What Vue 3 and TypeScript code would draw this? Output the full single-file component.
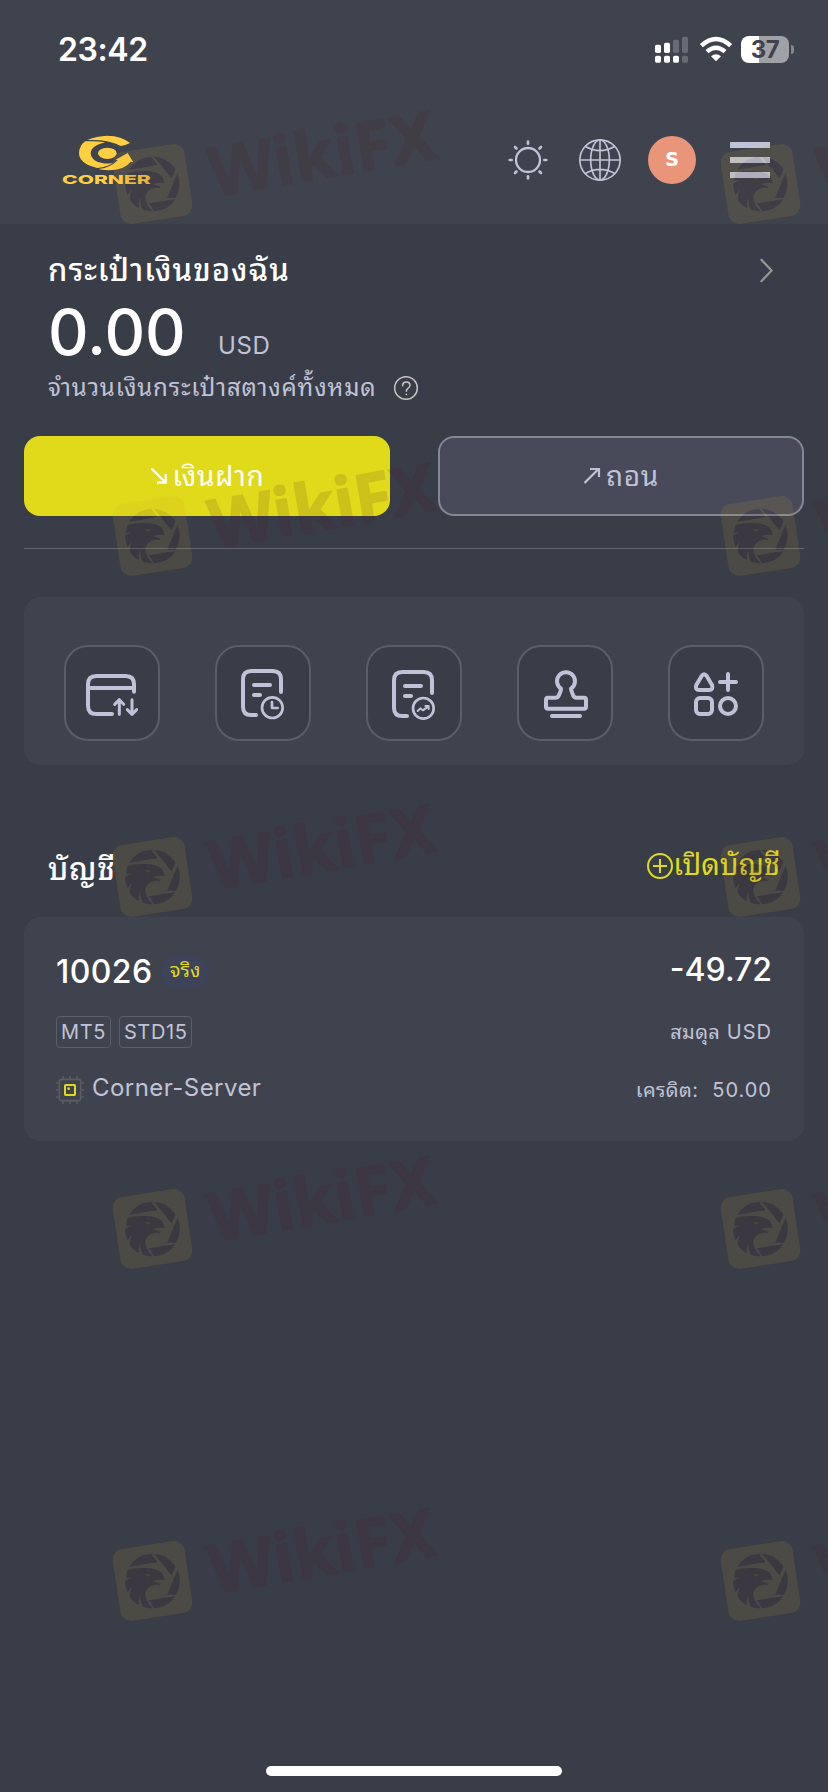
<script setup lang="ts">
interface Mark { x: number; y: number }

const columns = [152.5, 760.5]
const rows = [184, 536, 877, 1229, 1581]
const marks: Mark[] = rows.flatMap((y) => columns.map((x) => ({ x, y })))

const rays = [0, 45, 90, 135, 180, 225, 270, 315]
const tools = ['transfer', 'history', 'trades', 'verify', 'more']
const tags = ['MT5', 'STD15']
</script>

<template>
  <div class="screen">
    <header class="top">
      <div class="status">
        <span class="clock">23:42</span>
        <div class="indicators">
          <svg class="signal" viewBox="0 0 99 81">
            <g fill="#fff">
              <rect x="0" y="26" width="18" height="25" rx="5" />
              <rect x="27" y="20" width="18" height="31" rx="5" />
              <rect x="0" y="59" width="18" height="21" rx="5" />
              <rect x="27" y="59" width="18" height="21" rx="5" />
              <rect x="54" y="59" width="18" height="21" rx="5" />
            </g>
            <g fill="#686a76">
              <rect x="54" y="11" width="18" height="40" rx="5" />
              <rect x="81" y="2" width="18" height="49" rx="5" />
              <rect x="81" y="59" width="18" height="21" rx="5" />
            </g>
          </svg>
          <svg class="wifi" viewBox="0 0 96 81">
            <g fill="none" stroke="#fff" stroke-width="13">
              <path d="M4 29 Q48 -11 92 29" />
              <path d="M21 47 Q48 23 75 47" />
            </g>
            <path d="M33 61 Q48 49 63 61 L48 76 Z" fill="#fff" />
          </svg>
          <div class="battery"><span>37</span></div>
          <div class="nub"></div>
        </div>
      </div>
      <nav class="bar">
        <svg class="logo" viewBox="186 405 270 150">
          <g fill="#ffcf42">
            <path d="M262 420 Q290 408 322 407 Q365 408 390 429 Q375 437 362 438 Q335 424 300 421 Q280 419 262 420Z" />
            <path d="M256 424 Q290 422 316 427 Q272 437 272 461 Q275 485 310 490 Q325 492 340 488 Q325 500 292 504 Q238 492 237 460 Q238 436 256 424Z" />
            <path d="M296 507 Q332 503 353 481 L347 479 L383 459 L400 487 L392 485 Q375 510 325 511 Q305 510 296 507Z" />
            <ellipse cx="322" cy="460" rx="28" ry="17" />
            <text x="186" y="551" textLength="266" lengthAdjust="spacingAndGlyphs">CORNER</text>
          </g>
        </svg>
        <div class="actions">
          <svg class="sun" viewBox="-60 -60 120 120" fill="none" stroke="#c0c3d6">
            <circle r="36" stroke-width="7" />
            <path v-for="r in rays" :key="r" d="M0 -55 V-49" stroke-width="8" stroke-linecap="round" :transform="`rotate(${r})`" />
          </svg>
          <svg class="globe" viewBox="-63 -63 126 126" fill="none" stroke="#c0c3d6" stroke-width="5">
            <circle r="60.5" />
            <ellipse rx="28" ry="60" />
            <path d="M0 -60 V60 M-60 0 H60 M-45 -41 Q0 -15 45 -41 M-45 41 Q0 15 45 41" />
          </svg>
          <div class="avatar">S</div>
          <div class="menu"><i></i><i></i><i></i></div>
        </div>
      </nav>
    </header>

    <main>
      <section class="wallet">
        <div class="wallet-head">
          <h1>กระเป๋าเงินของฉัน</h1>
          <svg class="chevron" viewBox="0 0 14 26"><path d="M1.5 1.5 L12.5 13 L1.5 24.5" /></svg>
        </div>
        <div class="amount"><b>0.00</b><span>USD</span></div>
        <div class="total">
          <span>จำนวนเงินกระเป๋าสตางค์ทั้งหมด</span>
          <svg class="help" viewBox="-36 -36 72 72">
            <circle r="34" />
            <path d="M-10 -7 Q-10 -18 1 -18 Q12 -18 12 -8 Q12 -2 5 2 Q1 5 1 10" />
            <circle class="dot" cx="1" cy="19" r="2.6" />
          </svg>
        </div>
      </section>

      <div class="buttons">
        <button class="deposit">
          <svg viewBox="0 0 18 18"><path d="M1.5 1.5 L15.5 15.5 M7 15.7 H15.7 V7" /></svg>
          <span>เงินฝาก</span>
        </button>
        <button class="withdraw">
          <svg viewBox="0 0 18 18"><path d="M1.5 16 L15.5 2 M7 2 H16 V10" /></svg>
          <span>ถอน</span>
        </button>
      </div>
      <div class="divider"></div>

      <section class="tools">
        <div v-for="tool in tools" :key="tool" class="tile">
          <svg viewBox="6 6 276 276">
            <template v-if="tool === 'transfer'">
              <path d="M210 140 V118 Q210 93 185 93 H97 Q72 93 72 118 V182 Q72 207 97 207 H144 M72 129 H210" />
              <path class="mid" d="M166 208 V164 M152 178 L166 164 L179 178 M204 164 V208 M190 194 L204 208 L218 194" />
            </template>
            <template v-else-if="tool === 'history'">
              <path d="M198 141 V103 Q198 78 173 78 H109 Q84 78 84 103 V185 Q84 210 109 210 H123 M117 120 H165 M117 150 H135" />
              <circle class="thin" cx="172" cy="188" r="31" />
              <path class="thin" d="M171 171 V189 H188" />
            </template>
            <template v-else-if="tool === 'trades'">
              <path d="M198 144 V106 Q198 81 173 81 H109 Q84 81 84 106 V188 Q84 213 109 213 H123 M117 123 H165 M117 153 H135" />
              <circle class="thin" cx="172" cy="190" r="31" />
              <path class="thin fine" d="M155 198 L163 190 L171 196 L187 184 M178 183 H188 V192" />
            </template>
            <template v-else-if="tool === 'verify'">
              <path d="M132 131 A27 27 0 1 1 162 131 Q163 138 168 150 Q171 158 178 158 H201 Q207 158 207 164 V185 Q207 191 201 191 H93 Q87 191 87 185 V164 Q87 158 93 158 H116 Q123 158 126 150 Q132 138 132 131 Z M105 213 H189" />
            </template>
            <template v-else>
              <path d="M101 93 Q108 82 116 93 L132 120 Q137 135 123 135 H94 Q80 135 85 120 Z M180 87 V135 M156 111 H204" />
              <rect x="84" y="159" width="48" height="48" rx="12" />
              <circle cx="180" cy="183" r="24" />
            </template>
          </svg>
        </div>
      </section>

      <div class="accounts-head">
        <h2>บัญชี</h2>
        <a class="open">
          <svg viewBox="-13 -13 26 26"><circle r="12" /><path d="M-7 0 H7 M0 -7 V7" /></svg>
          <span>เปิดบัญชี</span>
        </a>
      </div>

      <section class="card">
        <div class="row first">
          <div class="left"><b class="num">10026</b><span class="badge">จริง</span></div>
          <span class="num balance">-49.72</span>
        </div>
        <div class="row second">
          <div class="left"><span v-for="tag in tags" :key="tag" class="tag">{{ tag }}</span></div>
          <span class="small"><span class="label">สมดุล</span> USD</span>
        </div>
        <div class="row third">
          <div class="left">
            <svg class="chip" viewBox="0 0 84 84" fill="none">
              <rect x="10" y="10" width="64" height="64" rx="7" stroke="#5a5b60" stroke-width="5" />
              <path d="M21 0 V9 M42 0 V9 M63 0 V9 M21 75 V84 M42 75 V84 M63 75 V84 M0 21 H9 M0 42 H9 M0 63 H9 M75 21 H84 M75 42 H84 M75 63 H84" stroke="#5a5b60" stroke-width="5" />
              <rect x="27" y="27" width="30" height="30" rx="2" stroke="#e0da1b" stroke-width="6" />
              <circle cx="38" cy="38" r="4" fill="#e0da1b" />
            </svg>
            <span class="server">Corner-Server</span>
          </div>
          <span class="small"><span class="label">เครดิต</span>:&nbsp; 50.00</span>
        </div>
      </section>
    </main>
    <div class="home"></div>

    <svg class="marks" viewBox="0 0 828 1792">
      <defs>
        <g id="blades">
          <path d="M-70 -43 A82 82 0 0 1 -5 -82 L15 -57 Z" />
          <path d="M5 -82 A82 82 0 0 1 69 -44 L57 -17 Z" />
          <path d="M75 -33 A82 82 0 0 1 69 42 L44 42 Z" />
          <path d="M69 46 A82 82 0 0 1 5 82 L-10 58 Z" />
          <path d="M-75 -32 Q-52 -40 -20 -39 Q14 -37 28 -24 Q36 -15 35 -2 Q24 -6 14 -4 L2 1 L24 8 L22 12 Q-5 8 -18 27 Q-31 48 0 82 Q-14 82 -29 77 Q-38 60 -36 40 Q-44 55 -40 72 Q-60 63 -69 44 Q-67 27 -59 15 Q-70 25 -75 34 Q-82 15 -82 0 L-64 -13 L-80 -10 Z" />
        </g>
        <mask id="frame" maskUnits="userSpaceOnUse" x="-130" y="-130" width="260" height="260">
          <rect x="-130" y="-130" width="260" height="260" fill="#fff" />
          <use href="#blades" fill="#000" />
        </mask>
      </defs>
      <g v-for="(m, i) in marks" :key="i" :transform="`translate(${m.x} ${m.y})`">
        <g transform="scale(.3333)">
          <g mask="url(#frame)">
            <rect x="-109" y="-109" width="218" height="218" rx="32" fill="#d0a528" fill-opacity=".125" transform="rotate(-8.6)" />
          </g>
          <use href="#blades" fill="#501720" fill-opacity=".13" />
          <path d="M-24 -20 L-4 -20 Q-8 -10 -18 -15 Z" fill="#d0a528" fill-opacity=".13" />
        </g>
        <g opacity=".13">
          <text class="brand" x="0" y="0" textLength="229" lengthAdjust="spacingAndGlyphs" transform="translate(61 13) rotate(-9.7)">WikiFX</text>
        </g>
      </g>
    </svg>
  </div>
</template>

<style>
body { background: #393d48; }
</style>

<style scoped>
* { box-sizing: border-box; }
.screen {
  position: relative;
  width: 828px;
  height: 1792px;
  overflow: hidden;
  background: #393d48;
  color: #fff;
  font-family: Inter, "Noto Sans Thai Looped", Loma, Garuda, Waree, "Noto Serif Thai", sans-serif;
  display: flex;
  flex-direction: column;
}
svg { display: block; flex: none; overflow: visible; }
h1, h2 { margin: 0; font-weight: 500; white-space: nowrap; }
.top { height: 224px; background: #3f434e; }
.status { height: 96px; padding: 0 34px 0 58px; display: flex; justify-content: space-between; }
.clock { font-size: 32px; font-weight: 600; line-height: 100px; letter-spacing: -.4px; }
.indicators { display: flex; align-items: center; height: 27px; margin-top: 36px; }
.signal { width: 33px; height: 27px; }
.wifi { width: 32px; height: 27px; margin: 0 9.5px 0 11.5px; }
.battery {
  width: 48px; height: 27px; border-radius: 8px;
  background: linear-gradient(90deg, #fff 0 18px, #a0a1a7 18px);
  color: #40434e; text-align: center; font-weight: 700; font-size: 24px; line-height: 27px; letter-spacing: -.5px;
}
.nub { width: 3px; height: 9px; margin-left: 2px; border-radius: 0 4px 4px 0; background: #85878e; }
.bar { display: flex; justify-content: space-between; align-items: center; height: 128px; padding: 0 58px 0 62px; }
.logo { width: 90px; height: 50px; }
.logo text { font: 800 37px Inter, sans-serif; }
.actions { display: flex; align-items: center; }
.sun { width: 40px; height: 40px; margin-right: 31px; }
.globe { width: 42px; height: 42px; margin-right: 27px; }
.avatar {
  width: 48px; height: 48px; margin-right: 34px; border-radius: 50%; background: #e99579;
  text-align: center; font: 700 19px/47px "DejaVu Sans", sans-serif;
}
.menu { width: 40px; display: grid; gap: 9px; }
.menu i { height: 6px; background: #bfc4d6; }
.wallet { height: 212px; padding: 20px 0 0 48px; }
.wallet-head { display: flex; height: 52px; justify-content: space-between; align-items: center; padding-right: 55px; }
h1 { font-size: 31px; line-height: 52px; letter-spacing: 1px; }
.chevron { width: 13px; height: 25px; }
.chevron path { fill: none; stroke: #989696; stroke-width: 2.4; stroke-linecap: round; stroke-linejoin: round; }
.amount { display: flex; height: 72px; line-height: 72px; }
.amount b { font-size: 63px; font-weight: 500; width: 170px; }
.amount span { font-size: 24px; line-height: 100px; color: #c0c3d6; letter-spacing: .6px; }
.total { display: flex; align-items: center; height: 40px; color: #c0c3d6; }
.total span { width: 346px; font-size: 24px; line-height: 40px; white-space: nowrap; letter-spacing: .85px; }
.help { width: 24px; height: 24px; }
.help circle, .help path { fill: none; stroke: #c5c5c2; stroke-width: 4.5; stroke-linecap: round; }
.help .dot { fill: #c5c5c2; stroke: none; }
.buttons { display: flex; gap: 48px; padding: 0 24px; }
button {
  flex: none; width: 366px; height: 80px; display: flex; align-items: center; justify-content: center; gap: 5px; padding: 0;
  border: 0; border-radius: 16px; color: #fff; font-family: inherit; font-size: 28px; line-height: 76px; letter-spacing: .7px;
}
button svg { width: 18px; height: 18px; }
button path { fill: none; stroke: currentColor; stroke-width: 2.2; }
.deposit { background: #e0da1b; }
.withdraw { background: #484a59; border: 2px solid #858794; color: #c0c3d6; }
.divider { height: 1px; margin: 32px 24px 48px; background: #62646f; }
.tools { height: 168px; margin: 0 24px; padding: 48px 40px 24px; border-radius: 16px; background: #3f434e; display: flex; justify-content: space-between; }
.tile { width: 96px; height: 96px; border: 2px solid #5b5d68; border-radius: 24px; background: #393d48; }
.tile path, .tile rect, .tile circle { fill: none; stroke: #c0c3d6; stroke-width: 12; stroke-linecap: round; stroke-linejoin: round; }
.tile .mid { stroke-width: 9; }
.tile .thin { stroke-width: 8; }
.tile .fine { stroke-width: 6; }
.accounts-head { display: flex; justify-content: space-between; height: 152px; padding: 78px 48px 0; }
h2 { font-size: 31px; line-height: 52px; letter-spacing: .8px; }
.open { display: flex; align-items: center; height: 46px; color: #e0da1b; font-size: 29px; line-height: 44px; }
.open span { height: 46px; }
.open svg { width: 26px; height: 26px; }
.open circle, .open path { fill: none; stroke: currentColor; stroke-width: 2; }
.card { height: 224px; margin: 0 24px; padding: 32px 32px 0; border-radius: 16px; background: #3f434e; }
.row { display: flex; justify-content: space-between; color: #c0c3d6; }
.left { display: flex; align-items: center; }
.num { font-size: 32px; font-weight: 500; color: #fff; }
.first { height: 46px; }
.first .left { height: 46px; }
.first b { line-height: 46px; width: 105px; letter-spacing: .4px; }
.balance { line-height: 42px; }
.badge { width: 48px; height: 32px; border-radius: 16px; background: #3d4459; color: #e0da1b; font-size: 20px; line-height: 28px; text-align: center; }
.second { height: 64px; align-items: center; padding-top: 9px; }
.second .left { gap: 8px; }
.tag { height: 32px; border: 1px solid #5b5d68; border-radius: 4px; padding: 0 4px; font-size: 20px; line-height: 30px; letter-spacing: .6px; }
.small { font-size: 20px; line-height: 32px; letter-spacing: 1px; white-space: nowrap; }
.label { letter-spacing: .4px; }
.third { height: 50px; align-items: center; padding-top: 11px; }
.chip { width: 28px; height: 28px; margin-right: 8px; }
.server { font-size: 24px; line-height: 28px; letter-spacing: .45px; position: relative; top: -2px; }
.home { width: 296px; height: 10px; border-radius: 5px; background: #fff; margin: auto auto 16px; }
.marks { position: absolute; inset: 0; width: 828px; height: 1792px; pointer-events: none; }
.brand { font: 700 68px "Noto Sans", sans-serif; fill: #501720; stroke: #501720; stroke-width: 1.5; stroke-linejoin: round; }
</style>
